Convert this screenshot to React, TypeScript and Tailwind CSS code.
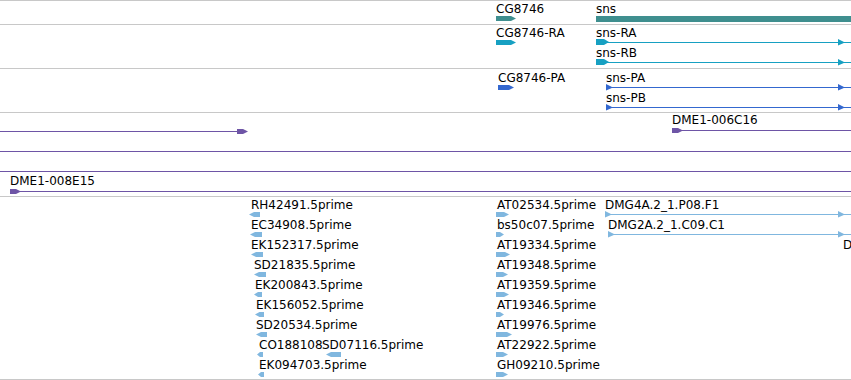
import React from "react";

const TEAL = "#3f8f8f";
const CYAN = "#17a0c2";
const BLUE = "#3468cf";
const PURPLE = "#6e55a6";
const EST = "#80b7df";
const W = 851;

type Dir = "right" | "left";

// shapes are drawn relative to the feature's left edge; y=0 is just under the label
function Box({ x1, x2, y = 1, h = 5, dir = "right", color }: { x1: number; x2: number; y?: number; h?: number; dir?: Dir; color: string }) {
  const tip = Math.min(5, (x2 - x1) / 2);
  const pts =
    dir === "right"
      ? `${x1},${y} ${x2 - tip},${y} ${x2},${y + h / 2} ${x2 - tip},${y + h} ${x1},${y + h}`
      : `${x1 + tip},${y} ${x2},${y} ${x2},${y + h} ${x1 + tip},${y + h} ${x1},${y + h / 2}`;
  return <polygon points={pts} fill={color} />;
}

function Arrowhead({ x, y = 3, color }: { x: number; y?: number; color: string }) {
  return <polygon points={`${x},${y - 3} ${x + 7},${y + 0.5} ${x},${y + 3.5}`} fill={color} />;
}

function Line({ x1 = 0, x2, y = 3, color }: { x1?: number; x2: number; y?: number; color: string }) {
  return <rect x={x1} y={y} width={x2 - x1} height={1} fill={color} />;
}

// a feature sits at its genomic x; label on top, glyph drawn underneath
function Feature({ x, label, children }: { x: number; label?: string; children: React.ReactNode }) {
  return (
    <div className="absolute top-0 flex flex-col pt-[2px]" style={{ left: x }}>
      <div className="h-[12px] text-[12px] leading-none text-black whitespace-nowrap">{label}</div>
      <svg width={W - x} height={7} className="overflow-visible">
        {children}
      </svg>
    </div>
  );
}

function Row({ children }: { children: React.ReactNode }) {
  return <div className="relative h-5 shrink-0">{children}</div>;
}

function Track({ h, top = false, pad = "", children }: { h: string; top?: boolean; pad?: string; children: React.ReactNode }) {
  return (
    <div className={`flex flex-col ${h} ${pad} ${top ? "border-t" : ""} border-b border-[#c8c8c8] overflow-hidden`}>
      {children}
    </div>
  );
}

// [label x, glyph start, glyph end] in page pixels
const leftEsts: [string, number, number, number][] = [
  ["RH42491.5prime", 251, 249, 260],
  ["EC34908.5prime", 251, 250, 262],
  ["EK152317.5prime", 251, 251, 263],
  ["SD21835.5prime", 254, 254, 266],
  ["EK200843.5prime", 255, 254, 262],
  ["EK156052.5prime", 256, 255, 264],
  ["SD20534.5prime", 256, 256, 267],
  ["CO188108", 259, 257, 263],
  ["EK094703.5prime", 259, 258, 264],
];

const midEsts: [string, number][] = [
  ["AT02534.5prime", 509],
  ["bs50c07.5prime", 504],
  ["AT19334.5prime", 510],
  ["AT19348.5prime", 508],
  ["AT19359.5prime", 509],
  ["AT19346.5prime", 504],
  ["AT19976.5prime", 512],
  ["AT22922.5prime", 508],
  ["GH09210.5prime", 508],
];

function Transcript({ x, label, color, thick }: { x: number; label: string; color: string; thick?: number }) {
  const end = W - x;
  return (
    <Feature x={x} label={label}>
      <Line x2={end} color={color} />
      {thick ? <Box x1={0} x2={thick} y={0} h={6} color={color} /> : <Arrowhead x={0} color={color} />}
      <Arrowhead x={838 - x} color={color} />
    </Feature>
  );
}

export default function App() {
  return (
    <div className="w-[851px] h-[380px] bg-white overflow-hidden" style={{ fontFamily: '"DejaVu Sans", Verdana, sans-serif' }}>
      <Track h="h-[25px]" top>
        <Row>
          <Feature x={496} label="CG8746">
            <Box x1={0} x2={20} color={TEAL} />
          </Feature>
          <Feature x={596} label="sns">
            <rect x={0} y={1} width={W - 596} height={6} fill={TEAL} />
          </Feature>
        </Row>
      </Track>

      <Track h="h-[44px]">
        <Row>
          <Feature x={496} label="CG8746-RA">
            <Box x1={0} x2={20} color={CYAN} />
          </Feature>
          <Transcript x={596} label="sns-RA" color={CYAN} thick={13} />
        </Row>
        <Row>
          <Transcript x={596} label="sns-RB" color={CYAN} thick={13} />
        </Row>
      </Track>

      <Track h="h-[44px]" pad="pt-px">
        <Row>
          <Feature x={498} label="CG8746-PA">
            <Box x1={0} x2={16} color={BLUE} />
          </Feature>
          <Transcript x={606} label="sns-PA" color={BLUE} />
        </Row>
        <Row>
          <Transcript x={606} label="sns-PB" color={BLUE} />
        </Row>
      </Track>

      <Track h="h-[84px]">
        <Row>
          <Feature x={0}>
            <Line x2={240} y={4} color={PURPLE} />
            <Box x1={237} x2={248} y={2} color={PURPLE} />
          </Feature>
          <div className="absolute top-[-1px] left-[672px]">
            <Feature x={0} label="DME1-006C16">
              <Line x2={W - 672} y={4} color={PURPLE} />
              <Box x1={0} x2={11} y={2} color={PURPLE} />
            </Feature>
          </div>
        </Row>
        <Row>
          <Feature x={0}>
            <Line x2={W} y={4} color={PURPLE} />
          </Feature>
        </Row>
        <Row>
          <Feature x={0}>
            <Line x2={W} y={4} color={PURPLE} />
          </Feature>
        </Row>
        <Row>
          <Feature x={10} label="DME1-008E15">
            <Line x2={W - 10} y={4} color={PURPLE} />
            <Box x1={0} x2={11} y={2} color={PURPLE} />
          </Feature>
        </Row>
      </Track>

      <Track h="h-[183px]">
        {leftEsts.map(([name, lx, g1, g2], i) => (
          <Row key={name}>
            <Feature x={lx} label={name}>
              <Box x1={g1 - lx} x2={g2 - lx} dir="left" color={EST} />
            </Feature>
            {i === 7 && (
              <Feature x={322} label="SD07116.5prime">
                <Box x1={4} x2={19} dir="left" color={EST} />
              </Feature>
            )}
            <Feature x={497} label={midEsts[i][0]}>
              <Box x1={-1} x2={midEsts[i][1] - 497} color={EST} />
            </Feature>
            {i === 0 && <Transcript x={605} label="DMG4A.2_1.P08.F1" color={EST} />}
            {i === 1 && <Transcript x={608} label="DMG2A.2_1.C09.C1" color={EST} />}
            {i === 2 && <Feature x={843} label="D">{null}</Feature>}
          </Row>
        ))}
      </Track>
    </div>
  );
}
